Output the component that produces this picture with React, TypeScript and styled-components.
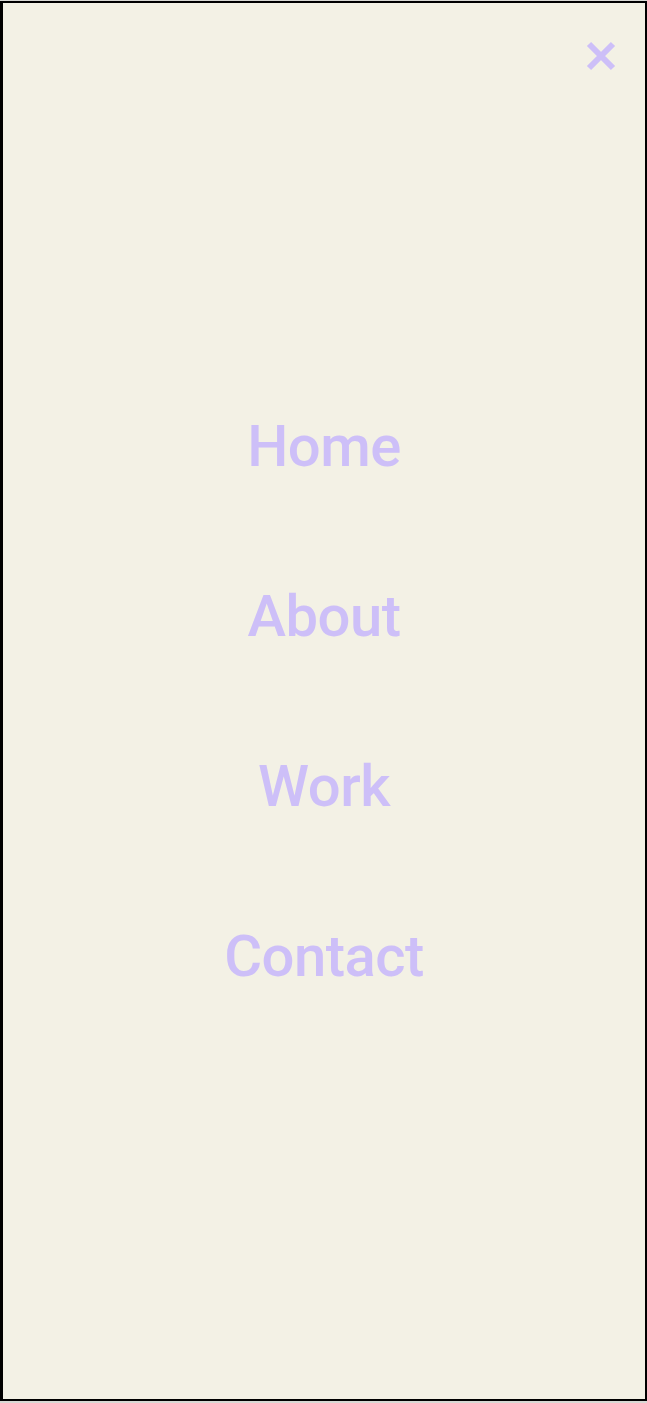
import styled, { createGlobalStyle } from 'styled-components';

const GlobalStyle = createGlobalStyle`
  html,
  body {
    margin: 0;
    padding: 0;
    background-color: #d8d8d4;
  }

  #root {
    height: 100vh;
  }
`;

const Frame = styled.div`
  position: relative;
  box-sizing: border-box;
  height: calc(100vh - 3px);
  margin: 1px 0 2px;
  border-style: solid;
  border-color: #000;
  border-width: 2px 2px 2px 3px;
  background-color: #f3f1e5;
  display: flex;
  align-items: center;
  justify-content: center;
`;

const CloseButton = styled.button`
  position: absolute;
  top: 33px;
  right: 24px;
  width: 40px;
  height: 40px;
  padding: 0;
  border: none;
  background: transparent;
  display: flex;
  align-items: center;
  justify-content: center;
  cursor: pointer;
`;

const Nav = styled.nav`
  display: flex;
  flex-direction: column;
  align-items: center;
  gap: 100px;
`;

const NavLink = styled.a`
  font-family: Roboto, 'Noto Sans', sans-serif;
  font-size: 58px;
  font-weight: 500;
  line-height: 70px;
  letter-spacing: -0.5px;
  color: #cdbff8;
  text-decoration: none;
`;

const links = ['Home', 'About', 'Work', 'Contact'];

const CloseIcon = () => (
  <svg width="30" height="30" viewBox="0 0 30 30" aria-hidden="true">
    <path
      d="M3 3 L27 27 M27 3 L3 27"
      stroke="#cdbff8"
      strokeWidth="6"
      strokeLinecap="butt"
    />
  </svg>
);

const App = () => (
  <>
    <GlobalStyle />
    <Frame>
      <CloseButton aria-label="Close menu">
        <CloseIcon />
      </CloseButton>
      <Nav>
        {links.map((label) => (
          <NavLink key={label} href="#">
            {label}
          </NavLink>
        ))}
      </Nav>
    </Frame>
  </>
);

export default App;
